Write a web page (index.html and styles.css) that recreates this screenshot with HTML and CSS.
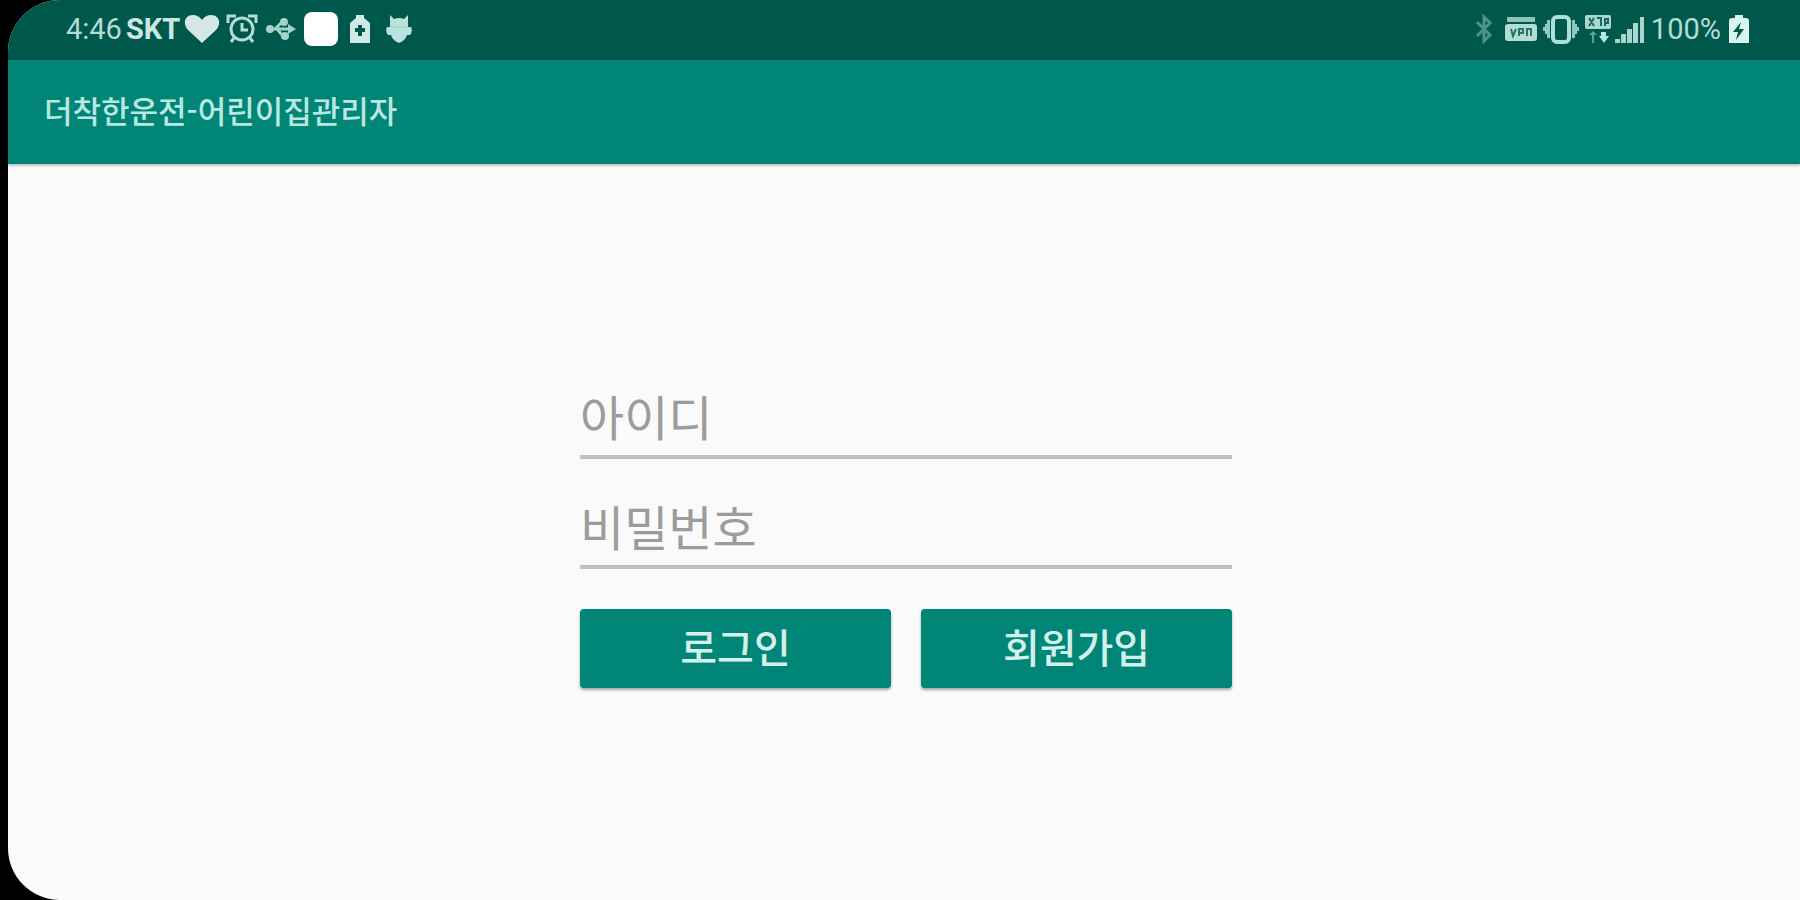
FILE: index.html
```html
<!DOCTYPE html>
<html lang="ko">
<head>
<meta charset="utf-8">
<meta name="viewport" content="width=device-width, initial-scale=1">
<title>더착한운전-어린이집관리자</title>
<link rel="stylesheet" href="styles.css">
</head>
<body>
<div class="screen">
  <div class="status-bar">
    <div class="status-group status-left">
      <span class="clock">4:46</span>
      <span class="carrier">SKT</span>
      <svg class="heart" width="36" height="30" viewBox="0 0 36 30" fill="#d5e6e6"><path d="M18 29 4 16C-2 9 1 1 9 1c4 0 7 2 9 5 2-3 5-5 9-5 8 0 11 8 5 15Z"/></svg>
      <svg width="32" height="30" viewBox="0 0 32 30" fill="none" stroke="#b4dcd3" stroke-width="3"><circle cx="16" cy="15" r="11"/><path d="M2 9V2h8M22 2h8v7M8 24l-3 4M24 24l3 4M16 9v7h6"/></svg>
      <svg width="30" height="30" viewBox="0 0 30 30" fill="none" stroke="#a3d2c7" stroke-width="3"><path d="M3 15h23M9 15l6-6h3M11 15l6 7h3"/><g fill="#a3d2c7" stroke="none"><circle cx="4" cy="15" r="4"/><circle cx="18" cy="8" r="4"/><circle cx="19" cy="22" r="4"/><path d="m22 10 8 5-8 5Z"/></g></svg>
      <svg width="34" height="34" viewBox="0 0 34 34"><rect width="34" height="34" rx="8" fill="#fff"/></svg>
      <svg class="battery-plus" width="20" height="30" viewBox="0 0 20 30"><path fill="#d0eae5" d="M6 1h8v3l6 5v20H0V9l6-5Z"/><path stroke="#00574b" stroke-width="4" d="M10 11v11M5 16h10"/></svg>
      <svg class="android" width="26" height="30" viewBox="0 0 26 30"><path fill="#b9e2dc" d="M4 1l4 4q5-2 10 0l4-4v12h3q2 4-1 8h-3q-2 6-8 8-6-2-8-8H2q-3-4-1-8h3Z"/><path stroke="#9ccdc4" d="M4 13h18"/></svg>
    </div>
    <div class="status-group status-right">
      <svg class="bluetooth" width="18" height="30" viewBox="0 0 18 30" fill="none" stroke="#4c9489" stroke-width="3"><path d="m2 8 13 13-6 6V3l6 6L2 22"/></svg>
      <svg width="32" height="30" viewBox="0 0 32 30"><path fill="#8cc4b9" d="M2 3h28v5H2Z"/><rect y="10" width="32" height="17" rx="3" fill="#b3ddd4"/><path fill="none" stroke="#26776a" stroke-width="2" d="m6 15 2 7 3-7M14 22v-7h4v4h-4M22 22v-7h4v7"/></svg>
      <svg width="36" height="30" viewBox="0 0 36 30"><rect x="10" y="3" width="16" height="25" rx="4" fill="none" stroke="#ade0d6" stroke-width="4"/><path fill="#8fc9be" d="M7 6v18H4v-4H2v-3H0v-4h2v-3h2V6ZM29 6v18h3v-4h2v-3h2v-4h-2v-3h-2V6Z"/></svg>
      <svg class="network" width="26" height="30" viewBox="0 0 26 30"><rect y="1" width="26" height="14" rx="2" fill="#a9d7ce"/><path fill="none" stroke="#17695e" stroke-width="2" d="M4 4l5 8M9 4l-5 8M12 4h4v8M20 12V5h3v4h-3"/><path fill="#5da196" d="m8 17 4 4h-3v8H7v-8H4Z"/><path fill="#b3e8dd" d="M16 18h5v4h3l-5 7-5-7h2Z"/></svg>
      <svg class="signal" width="30" height="30" viewBox="0 0 30 30" fill="#a8d6cc"><path d="M0 25h5v4H0ZM6 20h5v9H6ZM12 15h5v14h-5ZM18 9h5v20h-5Z"/><path d="M25 3h4v26h-4Z"/></svg>
      <span class="charge">100%</span>
      <svg width="20" height="30" viewBox="0 0 20 30"><path fill="#d9f4ef" d="M6 1h8v3h3q3 0 3 3v22H0V7q0-3 3-3h3Z"/><path fill="#00574b" d="M12 8 4 18h5l-2 8 8-11h-5Z"/></svg>
    </div>
  </div>
  <header class="app-bar">
    <h1 class="app-title">더착한운전-어린이집관리자</h1>
  </header>
  <main class="content">
    <form class="login-form">
      <input class="field" type="text" name="user" placeholder="아이디" aria-label="아이디">
      <input class="field" type="password" name="password" placeholder="비밀번호" aria-label="비밀번호">
      <div class="actions">
        <button class="action" type="submit">로그인</button>
        <button class="action" type="button">회원가입</button>
      </div>
    </form>
  </main>
</div>
</body>
</html>
```
FILE: styles.css
```css
* {
  box-sizing: border-box;
}

body {
  margin: 0;
  background: #000;
  font-family: Roboto, "Noto Sans CJK KR", sans-serif;
}

.screen {
  display: flex;
  flex-direction: column;
  min-height: 100vh;
  margin-left: 8px;
  overflow: hidden;
  border-radius: 52px 0 0 52px;
  background: #fafafa;
}

.status-bar {
  display: flex;
  justify-content: space-between;
  height: 60px;
  padding: 0 51px 2px 58px;
  background: #00574b;
  color: #b4dcd3;
}

.status-group {
  display: flex;
  align-items: center;
}

.status-group svg {
  flex: none;
}

.status-left {
  gap: 8px;
}

.status-right {
  gap: 6px;
}

.clock,
.charge {
  font-size: 29px;
  line-height: 32px;
}

.carrier {
  margin-left: -4px;
  color: #cbe7e2;
  font-size: 29px;
  font-weight: 700;
  line-height: 32px;
}

.heart {
  margin: 0 -2px 0 -4px;
}

.battery-plus {
  margin-left: 4px;
}

.android {
  margin-left: 8px;
}

.bluetooth {
  margin-right: 6px;
}

.network {
  margin-right: -2px;
}

.charge {
  margin-right: 2px;
}

.app-bar {
  display: flex;
  align-items: center;
  height: 104px;
  padding: 0 36px 4px;
  background: #008577;
  box-shadow: 0 1px 3px rgba(0, 0, 0, 0.35);
}

.app-title {
  margin: 0;
  color: #b9e8e0;
  font-family: "Noto Sans CJK KR", sans-serif;
  font-size: 31px;
  font-weight: 500;
  line-height: 40px;
}

.content {
  display: flex;
  flex: 1;
  align-items: center;
  justify-content: center;
  padding: 24px 20px 24px 24px;
}

.login-form {
  display: flex;
  flex-direction: column;
  gap: 28px;
  width: 100%;
  max-width: 652px;
}

.field {
  width: 100%;
  height: 82px;
  padding: 0 0 2px;
  border: 0;
  border-bottom: 4px solid #c0c0c0;
  border-radius: 0;
  outline: 0;
  background: transparent;
  color: #333;
  font-family: "Noto Sans CJK KR", sans-serif;
  font-size: 48px;
}

.field::placeholder {
  color: #9c9c9c;
  opacity: 1;
}

.actions {
  display: flex;
  gap: 30px;
  padding-top: 12px;
}

.action {
  flex: 1;
  height: 79px;
  padding: 0 0 4px;
  border: 0;
  border-radius: 4px;
  background: #008577;
  box-shadow: 0 2px 3px rgba(0, 0, 0, 0.35);
  color: #d3f0ea;
  font-family: "Noto Sans CJK KR", sans-serif;
  font-size: 40px;
  font-weight: 500;
  line-height: 56px;
}
```
